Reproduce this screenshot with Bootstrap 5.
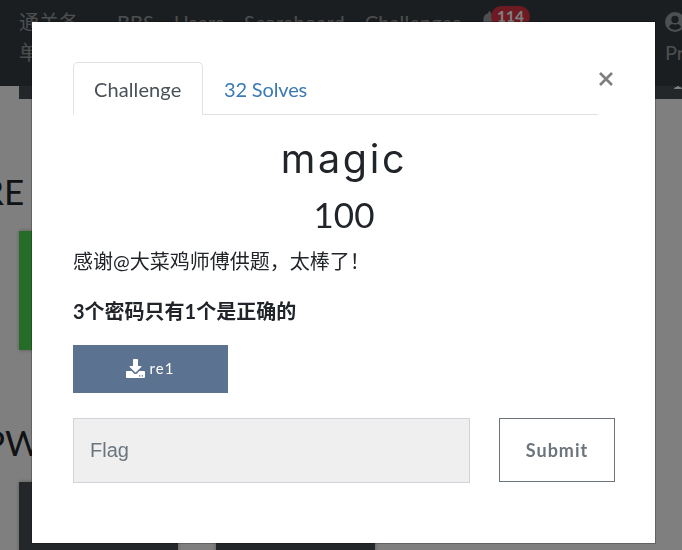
<!DOCTYPE html>
<html lang="zh-CN">
<head>
<meta charset="utf-8">
<meta name="viewport" content="width=device-width, initial-scale=1">
<title>Challenges</title>
<link href="https://cdn.jsdelivr.net/npm/bootstrap@5.3.0/dist/css/bootstrap.min.css" rel="stylesheet">
<style>
  html { font-size: 20px; }
  body { font-family: Lato, "Noto Sans CJK SC", sans-serif; line-height: 1.5; color: #212529; height: 550px; overflow: hidden; }
  .site-nav { height: 86px; background: #343c41; padding: 7px 0 0 19px; color: rgba(255,255,255,.5); overflow: hidden; }
  .site-nav .site-brand { width: 62px; margin-right: 36px; flex-shrink: 0; }
  .site-nav .site-link { margin-right: 20px; letter-spacing: .12px; }
  .bell { margin: 4px 0 0 0; width: 17px; height: 20px; flex-shrink: 0; }
  .count-pill { left: 10px; top: -5px; font-size: 15.500px; padding: 4px 6px; line-height: 13px; border-radius: 12px; color: #fff; }
  .profile { width: 60px; margin-left: 167px; flex-shrink: 0; }
  .board { padding-left: 19px; height: 464px; overflow: hidden; }
  .tile { width: 159px; height: 119px; background: #484e52; margin-right: 38px; box-shadow: 0 0 4px rgba(0,0,0,.3); flex-shrink: 0; }
  .tile-done { background: #4bd853; }
  .footer-strip { height: 13px; background: #484e52; }
  .group-title { font-size: 35px; line-height: 42px; margin: 71px 0 19px -37px; font-weight: 400; }
  .group-title.pwn { margin: 71px 0 19px -35px; }
  .modal-dialog.challenge-box { width: 623px; max-width: none; margin: 22px 0 0 32px; }
  .challenge-box .modal-content { height: 521px; border: 0; border-radius: 0; padding: 40px 40px 0 41px; box-shadow: 0 0 0 1px rgba(0,0,0,.22); }
  .challenge-box .nav-tabs { width: 525px; height: 53px; border-color: #dee2e6; }
  .challenge-box .nav-link { padding: 11px 20px 10px; height: 53px; font-size: 20px; line-height: 30px; border-radius: 5px 5px 0 0; color: #3b7ab5; letter-spacing: -.15px; }
  .challenge-box .nav-link.active { color: #495057; width: 130px; letter-spacing: .1px; }
  .close-x { width: 16px; height: 16px; margin-top: 9px; }
  .close-x svg { display: block; }
  .task-name { font: 400 39.500px/48px Inter, sans-serif; letter-spacing: 2.700px; margin: 20px 0 10px; }
  .task-score { font-size: 35px; line-height: 42px; font-weight: 400; margin: 0 0 11px; }
  .task-text { font-size: 20px; line-height: 30px; margin: 0 0 20px; }
  .file-btn { width: 155px; height: 48px; background: #5b7290; color: #fff; border-radius: 0; font-size: 15px; letter-spacing: 1px; margin-top: -1px; padding: 0 1px 2px 0; }
  .answer-row { margin-top: 25px; }
  .flag-input { width: 397px; height: 65px; background: #efefef; border-radius: 0; border-color: #ced4da; font: 20px "Liberation Sans", sans-serif; padding: 0 16px; }
  .flag-input::placeholder { color: #6c757d; }
  .submit-btn { width: 116px; height: 64px; border-radius: 0; font-size: 18px; font-weight: 700; letter-spacing: 1px; padding: 0; }
  .modal-backdrop.show { opacity: .5; }
</style>
</head>
<body>
<nav class="site-nav d-flex align-items-start">
  <div class="site-brand">通关各单</div>
  <span class="site-link">BBS</span><span class="site-link">Users</span><span class="site-link">Scoreboard</span><span class="site-link">Challenges</span>
  <div class="bell position-relative">
    <svg class="d-block" width="17" height="20" viewBox="0 0 448 512" fill="currentColor"><path d="M224 512c35 0 64-29 64-64H160c0 35 29 64 64 64zm215-150c-19-20-55-51-55-154 0-77-54-139-128-154V32a32 32 0 0 0-64 0v22C118 69 64 131 64 208c0 103-36 134-55 154-6 7-9 14-9 22 0 16 13 32 32 32h384c19 0 32-16 32-32 0-8-3-15-9-22z"/></svg>
    <span class="count-pill badge bg-danger position-absolute">114</span>
  </div>
  <div class="profile">
    <svg class="d-block mb-1 mt-1" width="20" height="20" viewBox="0 0 20 20"><circle cx="10" cy="10" r="10" fill="currentColor"/><circle cx="10" cy="7.4" r="3.7" fill="#343a40"/><path d="M4 15.2c.6-2.2 2.100-3.200 3.600-3.200.8.4 1.500.5 2.400.5s1.600-.1 2.400-.5c1.500 0 3 1 3.600 3.200a8 8 0 0 1-12 0z" fill="#343a40"/></svg>
    <div>Profile</div>
  </div>
</nav>
<main class="board">
  <div class="footer-strip d-flex justify-content-end"><svg width="8" height="3" viewBox="0 0 8 3"><path d="M0 3Q0 1 2.500 1Q3 0 4 0T5.500 1Q8 1 8 3z" fill="#fff"/></svg></div>
  <h3 class="group-title">RE</h3>
  <div class="d-flex"><div class="tile tile-done"></div></div>
  <h3 class="group-title pwn">PWN</h3>
  <div class="d-flex"><div class="tile"></div><div class="tile"></div></div>
</main>
<div class="modal-backdrop show"></div>
<div class="modal d-block" tabindex="-1" role="dialog">
  <div class="modal-dialog challenge-box">
    <div class="modal-content">
      <div class="d-flex align-items-start">
        <ul class="nav nav-tabs">
          <li class="nav-item"><a class="nav-link active" href="#">Challenge</a></li>
          <li class="nav-item"><a class="nav-link" href="#">32 Solves</a></li>
        </ul>
        <button class="close-x btn p-0 border-0" aria-label="Close"><svg width="16" height="16" viewBox="0 0 16 16"><path d="M2 2l12 12M14 2L2 14" stroke="#7f7f7f" stroke-width="2.700" fill="none"/></svg></button>
      </div>
      <h2 class="task-name text-center">magic</h2>
      <h3 class="task-score text-center">100</h3>
      <p class="task-text">感谢@大菜鸡师傅供题，太棒了！</p>
      <p class="task-text fw-bold">3个密码只有1个是正确的</p>
      <a class="file-btn btn d-flex align-items-center justify-content-center gap-1" href="#">
        <svg width="19" height="19" viewBox="0 0 19 19" fill="#fff"><path fill-rule="evenodd" d="M7 .8Q7 0 7.800 0h3.400q.8 0 .8.8V7h2.900q1.100 0 .4.9L9.900 13.200q-.4.4-.8 0L3.700 7.900Q3 7 4.100 7H7zM.9 12h4.700l2.400 2.400q1.500 1.300 3 0L13.400 12h4.700q.9 0 .9.9v5.200q0 .9-.9.9H.9q-.9 0-.9-.9v-5.200Q0 12 .9 12zM13 16.300v1.300h1.300v-1.300zm2.700 0v1.300H17v-1.300z"/></svg>
        <span>re1</span>
      </a>
      <div class="answer-row d-flex justify-content-between">
        <input class="flag-input form-control" placeholder="Flag">
        <button class="submit-btn btn btn-outline-secondary">Submit</button>
      </div>
    </div>
  </div>
</div>
<script src="https://cdn.jsdelivr.net/npm/bootstrap@5.3.0/dist/js/bootstrap.bundle.min.js"></script>
</body>
</html>
